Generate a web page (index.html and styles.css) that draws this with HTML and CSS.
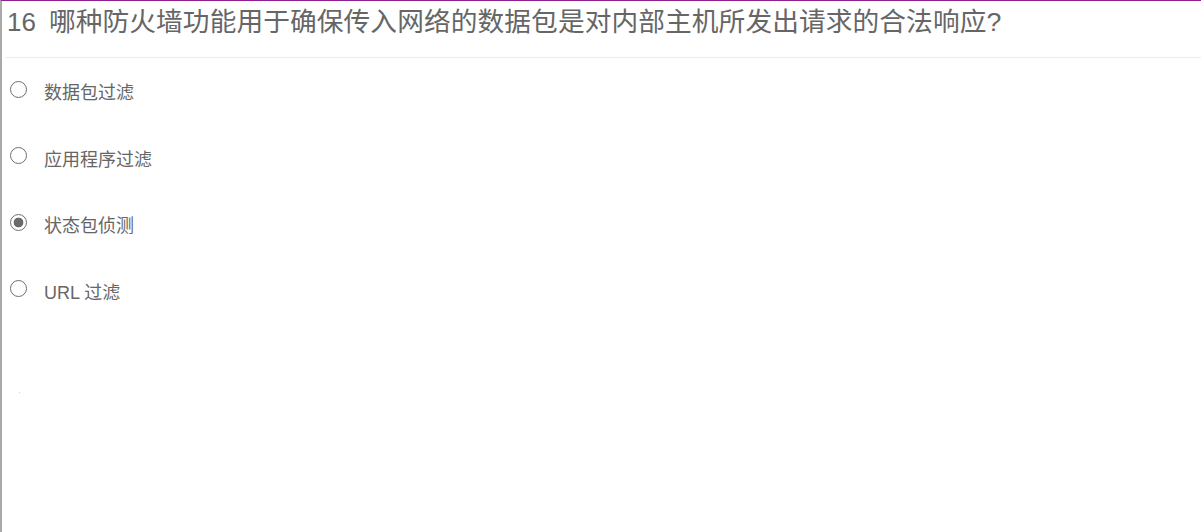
FILE: index.html
```html
<!DOCTYPE html>
<html lang="zh">
<head>
<meta charset="utf-8">
<link rel="stylesheet" href="styles.css">
</head>
<body>
<div class="page">
  <h2 class="question"><span class="num">16</span><span class="qtext">哪种防火墙功能用于确保传入网络的数据包是对内部主机所发出请求的合法响应?</span></h2>
  <div class="divider"></div>
  <ul class="options">
    <li class="option"><input type="radio" name="q16" class="radio"><span class="label">数据包过滤</span></li>
    <li class="option"><input type="radio" name="q16" class="radio"><span class="label">应用程序过滤</span></li>
    <li class="option"><input type="radio" name="q16" class="radio" checked><span class="label">状态包侦测</span></li>
    <li class="option"><input type="radio" name="q16" class="radio"><span class="label">URL 过滤</span></li>
  </ul>
  <div class="speck"></div>
</div>
</body>
</html>
```
FILE: styles.css
```css
html, body {
  margin: 0;
  padding: 0;
  background: #fff;
  height: 100%;
}
.page {
  box-sizing: border-box;
  height: 532px;
  border-left: 2px solid #a9a9a9;
  border-top: 1px solid #8e1e8e;
  padding: 0 0 0 3px;
  font-family: "Liberation Sans", "Noto Sans CJK SC", sans-serif;
  color: #666;
}
.question {
  margin: 0;
  padding: 3px 0 0 2px;
  height: 36px;
  font-size: 26px;
  font-weight: normal;
  line-height: 36px;
  color: #666;
  white-space: nowrap;
}
.num {
  margin-right: 13px;
}
.qtext {
  font-size: 26.7px;
  letter-spacing: 0.1px;
}
.divider {
  margin-top: 17px;
  height: 1px;
  background: #ececec;
}
.options {
  list-style: none;
  margin: 0;
  padding: 21px 0 0 5px;
}
.option {
  display: flex;
  align-items: center;
  height: 24px;
  margin-bottom: 42.5px;
}
.radio {
  appearance: none;
  -webkit-appearance: none;
  box-sizing: border-box;
  width: 17px;
  height: 17px;
  margin: 0 17px 0 0;
  border: 1.6px solid #6e6e6e;
  border-radius: 50%;
  background: #fff;
  position: relative;
  top: -2px;
}
.radio:checked {
  background: radial-gradient(circle, #6a6a6a 0 4.6px, #fff 5.2px);
}
.label {
  font-size: 18px;
  color: #666;
}
.speck {
  width: 1px;
  height: 1px;
  margin: 89px 0 0 14px;
  background: #ccc;
}
```
